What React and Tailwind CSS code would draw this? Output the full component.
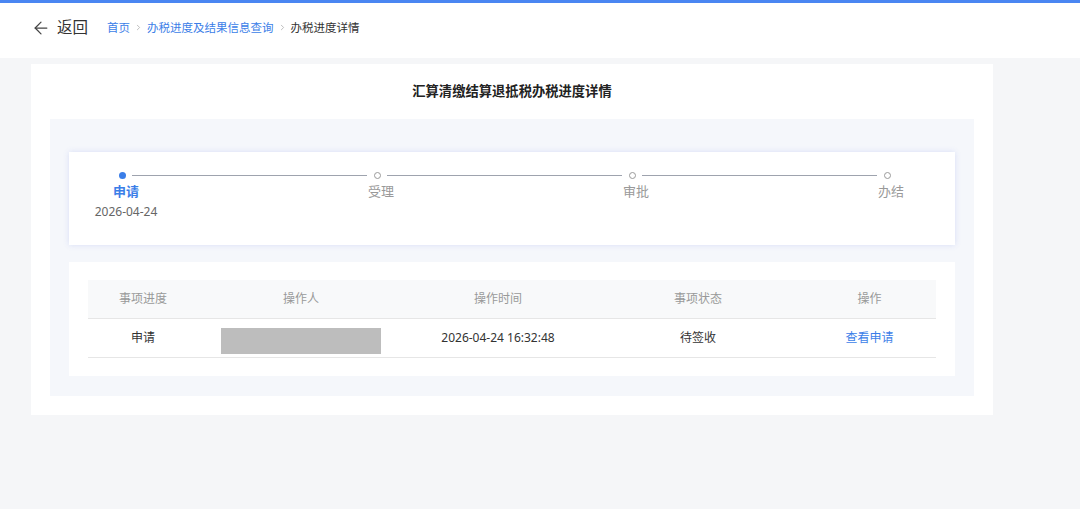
import React from 'react';
import { ArrowLeft, ChevronRight } from 'lucide-react';

const font = { fontFamily: '"Noto Sans", "Noto Sans CJK SC", sans-serif' };

const steps = [
  { name: '申请', date: '2026-04-24', active: true },
  { name: '受理' },
  { name: '审批' },
  { name: '办结' },
];

const cols = [
  { title: '事项进度', w: 'w-[110px]' },
  { title: '操作人', w: 'w-[206px]' },
  { title: '操作时间', w: 'w-[188px]' },
  { title: '事项状态', w: 'w-[212px]' },
  { title: '操作', w: 'w-[131px]' },
];

function Step({ step }) {
  return (
    <div className="w-[10px] flex flex-col items-center shrink-0">
      <div className="h-[10px] flex items-center justify-center">
        {step.active ? (
          <span className="block w-[7px] h-[7px] rounded-full bg-[#3b7ee8]" />
        ) : (
          <span className="block w-[7px] h-[7px] rounded-full border-[1.5px] border-[#9a9a9a] bg-white" />
        )}
      </div>
      <div
        className={`mt-[1px] whitespace-nowrap text-[13px] leading-[20px] translate-x-[4px] ${
          step.active ? 'text-[#3b7ee8] font-bold' : 'text-[#999]'
        }`}
      >
        {step.name}
      </div>
      {step.date && (
        <div className="mt-[1px] whitespace-nowrap text-[12px] leading-[20px] text-[#666] translate-x-[4px]">
          {step.date}
        </div>
      )}
    </div>
  );
}

export default function App() {
  return (
    <div className="min-h-[509px] bg-[#f5f6f8]" style={font}>
      <div className="h-[3px] bg-[#4a86f2]" />
      {/* header */}
      <div className="h-[55px] bg-white flex items-center pl-[31px] pb-[6px]">
        <ArrowLeft size={20} strokeWidth={1.5} className="text-[#444]" />
        <span className="ml-[6px] text-[15.5px] text-[#333]">返回</span>
        <div className="ml-[19px] flex items-center text-[11.5px]">
          <span className="text-[#3b7ee8]">首页</span>
          <ChevronRight size={9} className="mx-[4px] text-[#aaa]" />
          <span className="text-[#3b7ee8]">办税进度及结果信息查询</span>
          <ChevronRight size={9} className="mx-[4px] text-[#aaa]" />
          <span className="text-[#333]">办税进度详情</span>
        </div>
      </div>

      {/* main card */}
      <div className="ml-[31px] mt-[6px] w-[962px] h-[351px] bg-white pt-[18px] px-[19px]">
        <h1 className="text-center text-[13.3px] leading-[18px] font-bold text-[#222]">
          汇算清缴结算退抵税办税进度详情
        </h1>
        <div className="mt-[19px] h-[277px] bg-[#f5f7fb] px-[19px] pt-[33px]">
          {/* steps */}
          <div className="h-[93px] bg-white shadow-[0_0_6px_rgba(90,110,230,0.18)] pl-[48px] pr-[63px] pt-[18px]">
            <div className="flex items-start">
              {steps.map((s, i) => (
                <React.Fragment key={s.name}>
                  <Step step={s} />
                  {i < steps.length - 1 && (
                    <div className="flex-1 h-[10px] flex items-center px-[5px]">
                      <div className="h-px w-full bg-[#9ea3ae]" />
                    </div>
                  )}
                </React.Fragment>
              ))}
            </div>
          </div>

          {/* table */}
          <div className="mt-[17px] h-[114px] bg-white px-[19px] pt-[18px]">
            <div className="flex h-[39px] bg-[#f8f9fa] border-b border-[#e6e6e6] text-[12px] text-[#999]">
              {cols.map((c) => (
                <div key={c.title} className={`${c.w} flex items-center justify-center`}>
                  {c.title}
                </div>
              ))}
            </div>
            <div className="flex h-[39px] border-b border-[#e6e6e6] text-[12px] text-[#333]">
              <div className="w-[110px] flex items-center justify-center">申请</div>
              <div className="w-[206px] flex items-start justify-center pt-[9px]">
                <div className="w-[160px] h-[26px] bg-[#bdbdbd]" />
              </div>
              <div className="w-[188px] flex items-center justify-center">2026-04-24 16:32:48</div>
              <div className="w-[212px] flex items-center justify-center">待签收</div>
              <div className="w-[131px] flex items-center justify-center text-[#3b7ee8]">查看申请</div>
            </div>
          </div>
        </div>
      </div>
    </div>
  );
}
